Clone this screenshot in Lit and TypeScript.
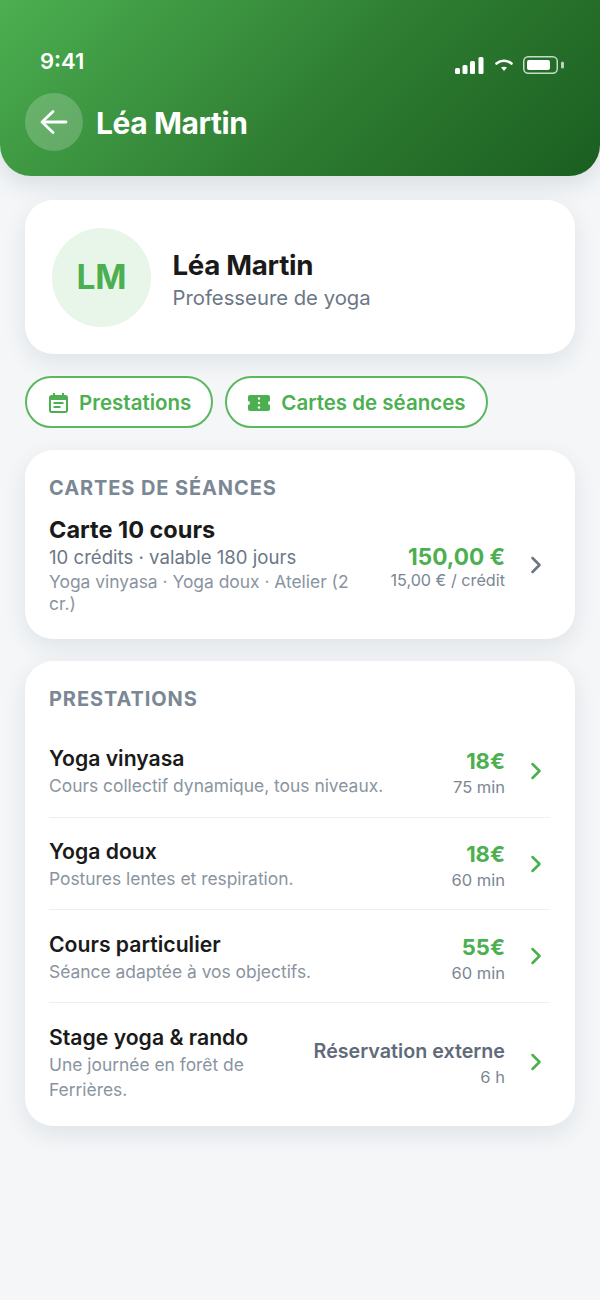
import { LitElement, html, css, svg } from "lit";
import { customElement } from "lit/decorators.js";

interface Prestation {
  name: string;
  desc: string;
  price: string;
  time: string;
  external?: boolean;
}

const PRESTATIONS: Prestation[] = [
  { name: "Yoga vinyasa", desc: "Cours collectif dynamique, tous niveaux.", price: "18€", time: "75 min" },
  { name: "Yoga doux", desc: "Postures lentes et respiration.", price: "18€", time: "60 min" },
  { name: "Cours particulier", desc: "Séance adaptée à vos objectifs.", price: "55€", time: "60 min" },
  { name: "Stage yoga & rando", desc: "Une journée en forêt de Ferrières.", price: "Réservation externe", time: "6 h", external: true },
];

const chevron = svg`<path d="M9 6l6 6-6 6" fill="none" stroke="currentColor" stroke-width="2.2" stroke-linecap="round" stroke-linejoin="round"/>`;

@customElement("app-root")
export class AppRoot extends LitElement {
  static styles = css`
    :host {
      display: block;
      width: 600px;
      height: 1300px;
      background: #f4f6f8;
      font-family: Inter, "Liberation Sans", sans-serif;
      color: #1a1a1a;
      overflow: hidden;
    }
    .header {
      height: 176px;
      box-sizing: border-box;
      padding: 47px 25px 0;
      background: linear-gradient(135deg, #4caf50 0%, #2e7d32 55%, #1b5e20 100%);
      border-radius: 0 0 31px 31px;
      box-shadow: 0 8px 24px rgba(20, 40, 60, 0.12);
      color: #fff;
    }
    .status {
      display: flex;
      justify-content: space-between;
      align-items: center;
      height: 28px;
      padding: 0 11px 0 15px;
    }
    .time {
      font-size: 22px;
      font-weight: 600;
    }
    .status-icons {
      display: flex;
      align-items: center;
      gap: 10.5px;
      margin-top: 8px;
    }
    .title-row {
      display: flex;
      align-items: center;
      gap: 13px;
      margin-top: 18px;
    }
    .back {
      width: 58px;
      height: 58px;
      border-radius: 50%;
      background: rgba(255, 255, 255, 0.2);
      display: flex;
      align-items: center;
      justify-content: center;
    }
    .title {
      font-size: 30px;
      font-weight: 700;
      letter-spacing: -0.4px;
      margin-top: 2px;
    }
    .content {
      padding: 24px 25px;
      display: flex;
      flex-direction: column;
    }
    .card {
      background: #fff;
      border-radius: 28px;
      box-shadow: 0 8px 24px rgba(20, 40, 60, 0.09);
    }
    .profile {
      height: 154px;
      box-sizing: border-box;
      padding: 0 27px;
      display: flex;
      align-items: center;
      gap: 21.5px;
    }
    .avatar {
      width: 99px;
      height: 99px;
      border-radius: 50%;
      background: #e8f5e9;
      color: #4caf50;
      font-size: 33.5px;
      font-weight: 700;
      display: flex;
      align-items: center;
      justify-content: center;
    }
    .profile-name {
      font-size: 27.7px;
      font-weight: 700;
      letter-spacing: -0.3px;
      line-height: 34px;
    }
    .profile-role {
      font-size: 20.3px;
      color: #6b7785;
      line-height: 32px;
    }
    .profile-text {
      margin-top: 7px;
    }
    .pills {
      display: flex;
      gap: 12px;
      margin-top: 22px;
    }
    .pill {
      height: 52px;
      box-sizing: border-box;
      padding: 1px 20px 0 22px;
      border: 2px solid #5cb860;
      border-radius: 26px;
      background: #fff;
      color: #4caf50;
      font-size: 20.5px;
      font-weight: 600;
      display: flex;
      align-items: center;
      gap: 11px;
    }
    .ticket {
      margin-left: -1px;
    }
    .section {
      margin-top: 22px;
      padding: 26px 25px 0 24px;
    }
    .section-label {
      font-size: 20px;
      line-height: 24px;
      font-weight: 700;
      color: #7b8794;
      letter-spacing: 0.9px;
    }
    .offer {
      padding-bottom: 24px;
    }
    .row {
      display: flex;
      align-items: center;
    }
    .main {
      flex: 1;
      min-width: 0;
    }
    .side {
      flex: none;
      text-align: right;
      margin-left: 16px;
    }
    .chev {
      flex: none;
      width: 28px;
      height: 28px;
      margin-left: 17px;
      color: #4caf50;
    }
    .chev.grey {
      color: #6b7785;
    }
    .offer-row {
      padding-top: 15px;
    }
    .offer-row .side {
      margin-top: 2px;
    }
    .offer-name {
      font-size: 23.5px;
      font-weight: 700;
      line-height: 30px;
    }
    .offer-credits {
      font-size: 18.6px;
      line-height: 25px;
      color: #6b7785;
    }
    .offer-scope {
      font-size: 17.4px;
      line-height: 22px;
      color: #8a94a0;
      margin-top: 1px;
      width: 305px;
    }
    .offer-price {
      font-size: 22.6px;
      font-weight: 700;
      color: #4caf50;
      line-height: 28px;
    }
    .offer-unit {
      font-size: 16.2px;
      color: #7b8794;
      line-height: 18px;
    }
    .list {
      margin-top: 14px;
    }
    .item {
      min-height: 92.7px;
      box-sizing: border-box;
      border-bottom: 1px solid #eceff3;
    }
    .item .main {
      margin-top: 2px;
    }
    .item .side {
      margin-top: 5px;
    }
    .item:last-child {
      border-bottom: none;
      padding: 21px 0 24px;
    }
    .item:last-child .main,
    .item:last-child .side {
      margin-top: 0;
    }
    .item:last-child .chev {
      margin-bottom: 3px;
    }
    .item-name {
      font-size: 21.2px;
      font-weight: 600;
      line-height: 27px;
    }
    .item-desc {
      font-size: 17.4px;
      line-height: 25px;
      margin-top: 1px;
      color: #8a94a0;
    }
    .item-price {
      font-size: 22px;
      font-weight: 700;
      color: #4caf50;
      line-height: 28px;
    }
    .item-price.external {
      font-size: 19.7px;
      font-weight: 600;
      color: #5f6b7a;
    }
    .item-time {
      font-size: 16.5px;
      color: #7b8794;
      line-height: 24px;
    }
  `;

  render() {
    return html`
      <div class="header">
        <div class="status">
          <span class="time">9:41</span>
          <div class="status-icons">
            <svg width="29" height="17" viewBox="0 0 29 17" fill="#fff">
              <rect x="0" y="11" width="5" height="6" rx="1.5" />
              <rect x="7.5" y="8" width="5" height="9" rx="1.5" />
              <rect x="15" y="4" width="5" height="13" rx="1.5" />
              <rect x="23.5" y="0" width="5" height="17" rx="1.5" />
            </svg>
            <svg width="18" height="13" viewBox="0 0 18 13">
              <path d="M1.5 4.5C6 .8 12 .8 16.5 4.5" fill="none" stroke="#fff" stroke-width="2.6" stroke-linecap="round" />
              <path d="M6 8.6L9 12l3-3.4C10 7.400 8 7.400 6 8.600z" fill="#fff" />
            </svg>
            <svg width="41" height="18" viewBox="0 0 41 18">
              <rect x="0.75" y="0.75" width="33.5" height="16.5" rx="4.5" fill="none" stroke="#fff" stroke-opacity="0.75" stroke-width="1.5" />
              <rect x="4" y="4" width="23" height="10" rx="2" fill="#fff" />
              <rect x="38" y="5.5" width="3" height="7" rx="1.5" fill="#fff" fill-opacity="0.7" />
            </svg>
          </div>
        </div>
        <div class="title-row">
          <div class="back">
            <svg width="30" height="30" viewBox="0 0 30 30" fill="none" stroke="#fff" stroke-width="2.8" stroke-linecap="round" stroke-linejoin="round">
              <path d="M27 15H4" />
              <path d="M14 4.500L3 15l11 10.500" />
            </svg>
          </div>
          <span class="title">Léa Martin</span>
        </div>
      </div>

      <div class="content">
        <div class="card profile">
          <div class="avatar">LM</div>
          <div class="profile-text">
            <div class="profile-name">Léa Martin</div>
            <div class="profile-role">Professeure de yoga</div>
          </div>
        </div>

        <div class="pills">
          <div class="pill">
            <svg width="19" height="20" viewBox="0 0 19 20">
              <path fill="#4caf50" d="M4 0h2v2h7V0h2v2h1.500C17.900 2 19 3.100 19 4.500v13c0 1.400-1.100 2.500-2.500 2.500h-14C1.100 20 0 18.900 0 17.500v-13C0 3.100 1.100 2 2.500 2H4V0zM2 7v10.500c0 .3.200.5.500.5h14c.3 0 .5-.2.500-.5V7H2z" />
              <rect x="4.5" y="9" width="10" height="2" fill="#4caf50" />
              <rect x="4.5" y="13" width="7" height="2" fill="#4caf50" />
            </svg>
            Prestations
          </div>
          <div class="pill">
            <svg class="ticket" width="22" height="16" viewBox="0 0 22 16">
              <path fill="#4caf50" d="M2 0h18c1.100 0 2 .9 2 2v4a2 2 0 0 0 0 4v4c0 1.100-.9 2-2 2H2c-1.100 0-2-.9-2-2v-4a2 2 0 0 0 0-4V2C0 .9.900 0 2 0z" />
              <circle cx="11" cy="3.500" r="1.200" fill="#fff" />
              <circle cx="11" cy="8" r="1.200" fill="#fff" />
              <circle cx="11" cy="12.500" r="1.200" fill="#fff" />
            </svg>
            Cartes de séances
          </div>
        </div>

        <div class="card section offer">
          <div class="section-label">CARTES DE SÉANCES</div>
          <div class="row offer-row">
            <div class="main">
              <div class="offer-name">Carte 10 cours</div>
              <div class="offer-credits">10 crédits · valable 180 jours</div>
              <div class="offer-scope">Yoga vinyasa · Yoga doux · Atelier (2 cr.)</div>
            </div>
            <div class="side">
              <div class="offer-price">150,00 €</div>
              <div class="offer-unit">15,00 € / crédit</div>
            </div>
            <svg class="chev grey" viewBox="0 0 24 24">${chevron}</svg>
          </div>
        </div>

        <div class="card section">
          <div class="section-label">PRESTATIONS</div>
          <div class="list">
            ${PRESTATIONS.map(
              (p) => html`
                <div class="row item">
                  <div class="main">
                    <div class="item-name">${p.name}</div>
                    <div class="item-desc">${p.desc}</div>
                  </div>
                  <div class="side">
                    <div class="item-price ${p.external ? "external" : ""}">${p.price}</div>
                    <div class="item-time">${p.time}</div>
                  </div>
                  <svg class="chev" viewBox="0 0 24 24">${chevron}</svg>
                </div>
              `
            )}
          </div>
        </div>
      </div>
    `;
  }
}
